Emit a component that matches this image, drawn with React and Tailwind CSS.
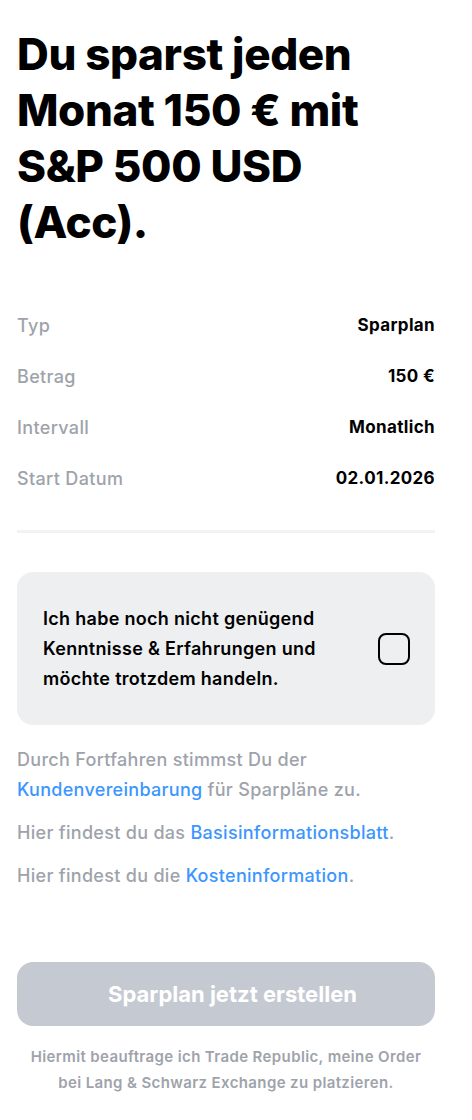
import React, { useState } from 'react'

function Row({ label, value }) {
    return (
        <div className='flex flex-row items-center justify-between h-[51px]'>
            <span className='text-[18px] tracking-[0.35px] font-medium text-[#9ea3ab]'>{label}</span>
            <span className='text-[17px] tracking-[0.35px] font-bold text-black'>{value}</span>
        </div>
    )
}

export default function App() {
    const [checked, setChecked] = useState(false)
    return (
        <div className='w-[472px] min-h-[1120px] bg-white font-["Inter",sans-serif] antialiased'>
            <div className='w-[418px] ml-[17px] pt-[26px] pb-[20px] flex flex-col'>
                <h1 className='text-[44px] leading-[56px] font-extrabold text-black tracking-[-0.4px]'>
                    Du sparst jeden Monat 150 € mit S&amp;P 500 USD (Acc).
                </h1>
                {/* Details */}
                <div className='mt-[50px] flex flex-col'>
                    <Row label='Typ' value='Sparplan' />
                    <Row label='Betrag' value='150 €' />
                    <Row label='Intervall' value='Monatlich' />
                    <Row label='Start Datum' value='02.01.2026' />
                </div>
                <div className='mt-[26px] h-[3px] bg-[#f3f3f4]' />
                {/* Warning */}
                <div className='mt-[39px] h-[153px] rounded-[16px] bg-[#eeeff1] flex flex-row items-center justify-between pl-[26px] pr-[25px]'>
                    <p className='w-[310px] text-[18px] leading-[30px] tracking-[0.3px] font-semibold text-black'>
                        Ich habe noch nicht genügend Kenntnisse &amp; Erfahrungen und möchte trotzdem handeln.
                    </p>
                    <button
                        onClick={() => setChecked(!checked)}
                        className='w-[32px] h-[32px] rounded-[8px] border-[2.5px] border-black bg-transparent'
                    />
                </div>
                {/* Legal */}
                <div className='mt-[20px] flex flex-col gap-[13px] text-[18px] leading-[30px] tracking-[0.3px] font-medium text-[#9ea3ab]'>
                    <p>
                        Durch Fortfahren stimmst Du der <span className='text-[#3b96ff]'>Kundenvereinbarung</span> für Sparpläne zu.
                    </p>
                    <p>
                        Hier findest du das <span className='text-[#3b96ff]'>Basisinformationsblatt</span>.
                    </p>
                    <p>
                        Hier findest du die <span className='text-[#3b96ff]'>Kosteninformation</span>.
                    </p>
                </div>
                <button className='mt-[71px] h-[64px] pl-[13px] rounded-[16px] bg-[#c5cad2] text-white text-[22px] font-bold'>
                    Sparplan jetzt erstellen
                </button>
                <p className='mt-[18px] text-center text-[15px] leading-[26px] tracking-[0.38px] font-semibold text-[#9ea3ab] px-[10px]'>
                    Hiermit beauftrage ich Trade Republic, meine Order bei Lang &amp; Schwarz Exchange zu platzieren.
                </p>
            </div>
        </div>
    )
}
